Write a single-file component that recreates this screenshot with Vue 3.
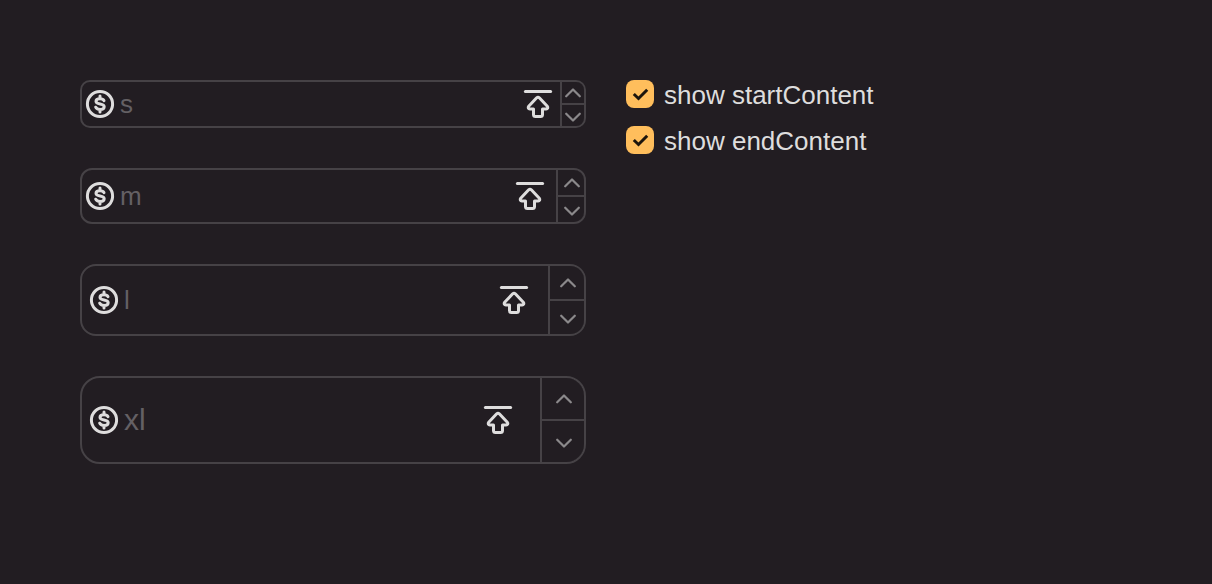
<script setup>
import { ref } from 'vue'

const sizes = ['s', 'm', 'l', 'xl']
const values = ref({ s: '', m: '', l: '', xl: '' })
const showStart = ref(true)
const showEnd = ref(true)

function step(size, delta) {
  values.value[size] = String((Number(values.value[size]) || 0) + delta)
}
</script>

<template>
  <main class="page">
    <section class="fields">
      <div v-for="size in sizes" :key="size" class="field" :class="`size-${size}`">
        <svg v-if="showStart" class="icon" viewBox="0 0 32 32" aria-hidden="true">
          <circle cx="16" cy="16" r="12.6" />
          <path d="M20 12.7c-.6-1.3-2-2-4-2-2.400 0-4 1-4 2.600 0 3.900 8.200 1.500 8.200 5.400 0 1.700-1.700 2.700-4.200 2.700-2.200 0-3.700-.8-4.300-2.200M16 8v2.500M16 21.500V24" />
        </svg>
        <input v-model="values[size]" class="input" type="text" inputmode="decimal" :placeholder="size" :aria-label="size" />
        <svg v-if="showEnd" class="icon" viewBox="0 0 32 32" aria-hidden="true">
          <path d="M3.400 3.500h25.200" />
          <path d="M14.700 9.800 6.700 18.300C5.700 19.500 6.400 21 7.800 21H11.500V26.500Q11.500 28.500 13.500 28.500H18.500Q20.500 28.500 20.500 26.500V21H24.200C25.600 21 26.300 19.500 25.300 18.300L17.300 9.800Q16 8.600 14.700 9.800Z" />
        </svg>
        <div class="stepper">
          <button type="button" class="step" aria-label="Increment" @click="step(size, 1)">
            <svg class="chevron" viewBox="0 0 16 10" aria-hidden="true"><path d="M1.200 8.300 8 1.500l6.800 6.800" /></svg>
          </button>
          <button type="button" class="step" aria-label="Decrement" @click="step(size, -1)">
            <svg class="chevron" viewBox="0 0 16 10" aria-hidden="true"><path d="m1.200 1.700 6.800 6.800 6.800-6.800" /></svg>
          </button>
        </div>
      </div>
    </section>
    <section class="options">
      <label class="option">
        <span class="box">
          <input v-model="showStart" class="check" type="checkbox" />
          <svg class="tick" viewBox="0 0 28 28" aria-hidden="true"><path d="m7.800 14 4.700 4.500 8.700-8.700" /></svg>
        </span>
        <span>show startContent</span>
      </label>
      <label class="option">
        <span class="box">
          <input v-model="showEnd" class="check" type="checkbox" />
          <svg class="tick" viewBox="0 0 28 28" aria-hidden="true"><path d="m7.800 14 4.700 4.500 8.700-8.700" /></svg>
        </span>
        <span>show endContent</span>
      </label>
    </section>
  </main>
</template>

<style>
body {
  background: #221d22;
}
</style>

<style scoped>
.page {
  display: grid;
  grid-template-columns: repeat(2, minmax(0, 1fr));
  gap: 40px;
  padding: 80px;
  font-family: "Liberation Sans", Arial, sans-serif;
  font-size: 26px;
  color: #dedddd;
}
.fields {
  display: flex;
  flex-direction: column;
  gap: 40px;
}
.field {
  display: flex;
  align-items: center;
  box-sizing: border-box;
  border: 2px solid #464246;
  overflow: hidden;
}
.size-s {
  --end: 6px;
  --step: 22px;
  height: 48px;
  padding-left: 2px;
  border-radius: 10px;
}
.size-m {
  --end: 10px;
  --step: 26px;
  height: 56px;
  padding-left: 2px;
  border-radius: 12px;
}
.size-l {
  --end: 18px;
  --step: 34px;
  height: 72px;
  padding-left: 6px;
  border-radius: 16px;
}
.size-xl {
  --end: 26px;
  --step: 42px;
  height: 88px;
  padding-left: 6px;
  border-radius: 20px;
  font-size: 30px;
}
.icon {
  flex: none;
  width: 32px;
  height: 32px;
  fill: none;
  stroke: #dedddd;
  stroke-width: 3;
  stroke-linecap: round;
  stroke-linejoin: round;
}
.input {
  flex: 1;
  min-width: 0;
  height: 100%;
  padding: 0 4px;
  border: 0;
  outline: 0;
  background: transparent;
  color: inherit;
  font: inherit;
}
.input::placeholder {
  color: #646064;
  opacity: 1;
}
.stepper {
  display: grid;
  grid-template-rows: repeat(2, minmax(0, 1fr));
  align-self: stretch;
  gap: 2px;
  width: var(--step);
  margin-left: var(--end);
  border-left: 2px solid #464246;
  background: #464246;
}
.step {
  display: flex;
  align-items: center;
  justify-content: center;
  min-height: 0;
  padding: 0 0 0 2px;
  border: 0;
  background: #221d22;
  cursor: pointer;
}
.size-s .step {
  padding-left: 0;
}
.step + .step {
  padding-top: 2px;
}
.chevron {
  width: 16px;
  height: 10px;
  fill: none;
  stroke: #8b898b;
  stroke-width: 2.2;
  stroke-linecap: round;
  stroke-linejoin: round;
}
.options {
  display: flex;
  flex-direction: column;
  align-items: flex-start;
  gap: 16px;
}
.option {
  display: flex;
  gap: 10px;
  line-height: 30px;
  cursor: pointer;
}
.box {
  display: grid;
  width: 28px;
  height: 28px;
}
.check,
.tick {
  grid-area: 1 / 1;
  width: 28px;
  height: 28px;
}
.check {
  appearance: none;
  margin: 0;
  border-radius: 8px;
  background: #464246;
}
.check:checked {
  background: #ffbe5c;
}
.tick {
  visibility: hidden;
  pointer-events: none;
  fill: none;
  stroke: #1c150c;
  stroke-width: 3;
}
.check:checked + .tick {
  visibility: visible;
}
</style>
